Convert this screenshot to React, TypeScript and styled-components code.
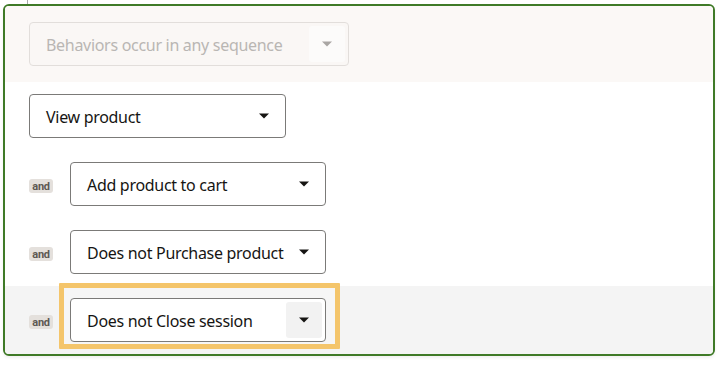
import styled, { createGlobalStyle } from "styled-components";

const Global = createGlobalStyle`
  html, body {
    margin: 0;
    padding: 0;
    background: #ffffff;
  }
  body {
    font-family: "Noto Sans", "Open Sans", sans-serif;
    color: #161513;
  }
`;

const Page = styled.div`
  position: relative;
  padding: 4px 9px 9px 3px;
`;

const Connector = styled.div`
  position: absolute;
  left: 27px;
  top: 0;
  width: 1px;
  height: 4px;
  background: #a8a8a8;
`;

const Panel = styled.div`
  width: 708px;
  border: 2px solid #3f7a27;
  border-radius: 6px;
  overflow: hidden;
  background: #ffffff;
  box-shadow: 0 2px 3px rgba(0, 0, 0, 0.06);
`;

const Header = styled.div`
  background: #fbf8f6;
  padding: 16px 24px;
`;

const Row = styled.div<{ $shaded?: boolean }>`
  position: relative;
  display: flex;
  align-items: center;
  gap: 17px;
  height: 68px;
  box-sizing: border-box;
  padding: 12px 24px;
  background: ${(p) => (p.$shaded ? "#f4f4f4" : "transparent")};
`;

const Select = styled.div<{ $width: number; $disabled?: boolean }>`
  position: relative;
  z-index: 1;
  display: flex;
  align-items: center;
  justify-content: space-between;
  box-sizing: border-box;
  width: ${(p) => p.$width}px;
  height: 44px;
  padding: 1px 3px 0 16px;
  border: 1px solid ${(p) => (p.$disabled ? "#e2dedb" : "#7b7a78")};
  border-radius: 4px;
  background: ${(p) => (p.$disabled ? "#faf7f5" : "#ffffff")};
  color: ${(p) => (p.$disabled ? "#b9b6b3" : "#161513")};
  font-size: 16px;
  line-height: 20px;
  letter-spacing: -0.3px;
  white-space: nowrap;
`;

const ArrowBox = styled.span<{ $bg?: string }>`
  display: flex;
  align-items: center;
  justify-content: center;
  width: 36px;
  height: 36px;
  margin-top: -1px;
  border-radius: 3px;
  background: ${(p) => p.$bg ?? "transparent"};
`;

const Badge = styled.span`
  display: inline-flex;
  align-items: center;
  justify-content: center;
  width: 24px;
  height: 14px;
  margin-top: 4px;
  border-radius: 3px;
  background: #e4e0dc;
  color: #5d5853;
  font-family: "Roboto", "Noto Sans", sans-serif;
  font-weight: 700;
  font-size: 11px;
  letter-spacing: -0.3px;
`;

const Highlight = styled.div`
  position: absolute;
  left: 54px;
  top: -3px;
  width: 281px;
  height: 66px;
  box-sizing: border-box;
  border: 5px solid #f4c56b;
  border-radius: 1px;
  background: #f6f6f6;
`;

const Caret = ({ color }: { color: string }) => (
  <svg width="10" height="6" viewBox="0 0 10 6">
    <path d="M0 0.5 H10 L5 5.5 Z" fill={color} />
  </svg>
);

type Step = { label: string; and: boolean; focused?: boolean };

const steps: Step[] = [
  { label: "View product", and: false },
  { label: "Add product to cart", and: true },
  { label: "Does not Purchase product", and: true },
  { label: "Does not Close session", and: true, focused: true },
];

export default function App() {
  return (
    <>
      <Global />
      <Page>
        <Connector />
        <Panel>
          <Header>
            <Select $width={320} $disabled>
              Behaviors occur in any sequence
              <ArrowBox $bg="#fcfbfa">
                <Caret color="#a9a6a3" />
              </ArrowBox>
            </Select>
          </Header>
          {steps.map((s) => (
            <Row key={s.label} $shaded={s.focused}>
              {s.focused && <Highlight />}
              {s.and && <Badge>and</Badge>}
              <Select $width={s.and ? 256 : 257}>
                {s.label}
                <ArrowBox $bg={s.focused ? "#f2f2f2" : undefined}>
                  <Caret color="#161513" />
                </ArrowBox>
              </Select>
            </Row>
          ))}
        </Panel>
      </Page>
    </>
  );
}
